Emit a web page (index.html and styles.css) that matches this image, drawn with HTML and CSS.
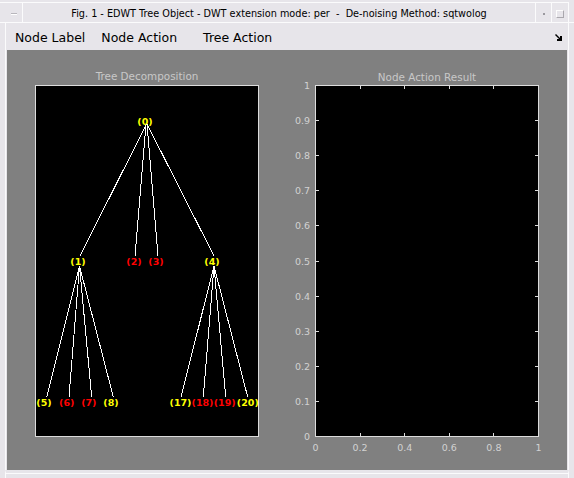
FILE: index.html
```html
<!DOCTYPE html>
<html lang="en">
<head>
    <meta charset="UTF-8">
    <title>Fig. 1 - EDWT Tree Object</title>
    <link rel="stylesheet" href="styles.css">
</head>
<body>
    <div class="window">
        <div class="titlebar">
            <div class="tb-btn tb-menu"><span class="dash"></span></div>
            <div class="tb-title">Fig. 1 - EDWT Tree Object - DWT extension mode: per&nbsp; - &nbsp;De-noising Method: sqtwolog</div>
            <div class="tb-btn tb-shade"><span class="dot"></span></div>
            <div class="tb-btn tb-max"><span class="box"></span></div>
        </div>

        <div class="client">
            <div class="menubar">
                <span class="menu-item">Node Label</span>
                <span class="menu-item">Node Action</span>
                <span class="menu-item tree-action">Tree Action</span>
                <svg class="dock-arrow" width="8" height="8" viewBox="0 0 8 8">
                    <path d="M0 1 L1 0 L5 4 L5 2 L7 2 L7 7 L2 7 L2 5 L4 5 Z" fill="#000"/>
                </svg>
            </div>

            <div class="figure">
                <div class="panel">
                    <div class="panel-title">Tree Decomposition</div>
                    <svg class="axes" width="224" height="352">
                        <rect x="0.5" y="0.5" width="223" height="351" fill="#000" stroke="#dcdcdc"/>
                        <g class="edges" stroke="#fff" stroke-width="1">
                            <line x1="111.5" y1="39" x2="45" y2="171"/>
                            <line x1="111" y1="39" x2="100" y2="171"/>
                            <line x1="112" y1="39" x2="123" y2="171"/>
                            <line x1="112" y1="39" x2="179" y2="171"/>
                            <line x1="44.5" y1="181" x2="11.7" y2="312"/>
                            <line x1="44.5" y1="181" x2="34" y2="312"/>
                            <line x1="44.5" y1="181" x2="56.7" y2="312"/>
                            <line x1="44.5" y1="181" x2="78.3" y2="312"/>
                            <line x1="179" y1="181" x2="146" y2="312"/>
                            <line x1="179" y1="181" x2="168.3" y2="312"/>
                            <line x1="179" y1="181" x2="190.7" y2="312"/>
                            <line x1="179" y1="181" x2="212.7" y2="312"/>
                        </g>
                        <g class="nodes">
                            <text class="leaf" x="110" y="36">(0)</text>
                            <text class="leaf" x="43" y="176">(1)</text>
                            <text class="cut" x="99" y="176">(2)</text>
                            <text class="cut" x="121" y="176">(3)</text>
                            <text class="leaf" x="177" y="176">(4)</text>
                            <text class="leaf" x="9" y="317">(5)</text>
                            <text class="cut" x="31.7" y="317">(6)</text>
                            <text class="cut" x="53.8" y="317">(7)</text>
                            <text class="leaf" x="76" y="317">(8)</text>
                            <text class="leaf" x="145.5" y="317">(17)</text>
                            <text class="cut" x="167.5" y="317">(18)</text>
                            <text class="cut" x="189.7" y="317">(19)</text>
                            <text class="leaf" x="212.8" y="317">(20)</text>
                        </g>
                    </svg>
                </div>

                <div class="panel result">
                    <div class="panel-title">Node Action Result</div>
                    <svg class="axes" width="224" height="352" id="resultAxes">
                        <rect x="0.5" y="0.5" width="223" height="351" fill="#000" stroke="#dcdcdc"/>
                        <g class="ticks" id="ticks" stroke="#dcdcdc"></g>
                        <g class="tick-labels" id="tickLabels"></g>
                    </svg>
                </div>
            </div>
        </div>

        <div class="bottom-edge"></div>
    </div>

    <script>
        const ns = 'http://www.w3.org/2000/svg';
        const ticks = document.getElementById('ticks');
        const labels = document.getElementById('tickLabels');

        function add(parent, tag, attrs, text) {
            const el = document.createElementNS(ns, tag);
            for (const k in attrs) el.setAttribute(k, attrs[k]);
            if (text !== undefined) el.textContent = text;
            parent.appendChild(el);
        }

        // x axis 0..1 step 0.2
        for (let k = 0; k <= 5; k++) {
            const x = 0.5 + 223 * k / 5;
            if (k > 0 && k < 5) {
                add(ticks, 'line', { x1: x, y1: 1, x2: x, y2: 4 });
                add(ticks, 'line', { x1: x, y1: 348, x2: x, y2: 351 });
            }
            const label = k === 0 ? '0' : k === 5 ? '1' : (k / 5).toFixed(1);
            add(labels, 'text', { x: x, y: 362, 'text-anchor': 'middle' }, label);
        }

        // y axis 0..1 step 0.1
        for (let k = 0; k <= 10; k++) {
            const y = 351.5 - 351 * k / 10;
            if (k > 0 && k < 10) {
                add(ticks, 'line', { x1: 1, y1: y, x2: 4, y2: y });
                add(ticks, 'line', { x1: 220, y1: y, x2: 223, y2: y });
            }
            const label = k === 0 ? '0' : k === 10 ? '1' : (k / 10).toFixed(1);
            add(labels, 'text', { x: -5, y: y, 'text-anchor': 'end' }, label);
        }
    </script>
</body>
</html>
```

FILE: styles.css
```css
* {
    box-sizing: border-box;
    margin: 0;
    padding: 0;
}

body {
    font-family: 'DejaVu Sans', sans-serif;
    background-color: #e7e5ea;
}

.window {
    width: 574px;
    height: 478px;
    display: flex;
    flex-direction: column;
    background-color: #e7e5ea;
}

/* title bar */
.titlebar {
    display: flex;
    height: 23px;
    padding-top: 2px;
    border-bottom: 1px solid #fbfbfc;
}

.tb-btn {
    display: flex;
    align-items: center;
    justify-content: center;
    border-top: 1px solid #fbfbfc;
}

.tb-menu {
    width: 23px;
    padding-left: 5px;
    border-right: 1px solid #fbfbfc;
}

.dash {
    width: 6px;
    height: 2px;
    margin-top: 2px;
    background-color: #b8b6bc;
    border-bottom: 1px solid #fff;
}

.tb-title {
    flex: 1;
    border-top: 1px solid #fbfbfc;
    font-size: 9.7px;
    line-height: 20px;
    padding-top: 1px;
    text-align: center;
    color: #000;
    white-space: nowrap;
}

.tb-shade {
    width: 17px;
    border-left: 1px solid #fbfbfc;
    border-right: 1px solid #fbfbfc;
}

.dot {
    width: 2px;
    height: 2px;
    margin-top: 2px;
    background-color: #9a989e;
}

.tb-max {
    width: 17px;
    margin-right: 5px;
    border-right: 1px solid #fbfbfc;
}

.box {
    width: 8px;
    height: 8px;
    margin-top: 2px;
    border: 1px solid #fdfdfd;
    border-right-color: #a9a7ad;
    border-bottom-color: #a9a7ad;
}

/* client area */
.client {
    flex: 1;
    margin: 0 5px;
    border-left: 1px solid #fbfbfc;
    border-right: 1px solid #fbfbfc;
    display: flex;
    flex-direction: column;
}

.menubar {
    display: flex;
    align-items: center;
    height: 27px;
    padding-top: 2px;
    padding-left: 1px;
    font-size: 12.5px;
    color: #000;
}

.menu-item {
    padding: 0 8px;
}

.tree-action {
    margin-left: 10px;
}

.dock-arrow {
    margin-left: auto;
    margin-right: 5px;
}

/* figure canvas */
.figure {
    display: flex;
    width: 560px;
    height: 420px;
    margin-left: 1px;
    padding: 19px 0 0 28px;
    gap: 56px;
    background-color: #808080;
}

.panel {
    display: flex;
    flex-direction: column;
    width: 224px;
}

.panel-title {
    height: 14px;
    margin-bottom: 2px;
    font-size: 10.4px;
    line-height: 14px;
    text-align: center;
    color: #c8c8c8;
    white-space: nowrap;
}

.result .panel-title {
    padding-top: 1px;
}

.axes {
    display: block;
    overflow: visible;
}

.edges line {
    shape-rendering: crispEdges;
}

.nodes text {
    font-family: 'DejaVu Sans', sans-serif;
    font-weight: bold;
    font-size: 9.5px;
    text-anchor: middle;
    dominant-baseline: central;
}

.nodes .leaf {
    fill: #ffff00;
}

.nodes .cut {
    fill: #ff0000;
}

.ticks line {
    shape-rendering: crispEdges;
}

.tick-labels text {
    font-family: 'DejaVu Sans', sans-serif;
    font-size: 9.5px;
    fill: #d2d2d2;
    dominant-baseline: central;
}

.bottom-edge {
    height: 8px;
    margin: 0 5px;
    border-top: 3px solid #e7e5ea;
    border-left: 1px solid #fbfbfc;
    border-right: 1px solid #fbfbfc;
    box-shadow: inset 0 1px 0 #fbfbfc;
}
```
